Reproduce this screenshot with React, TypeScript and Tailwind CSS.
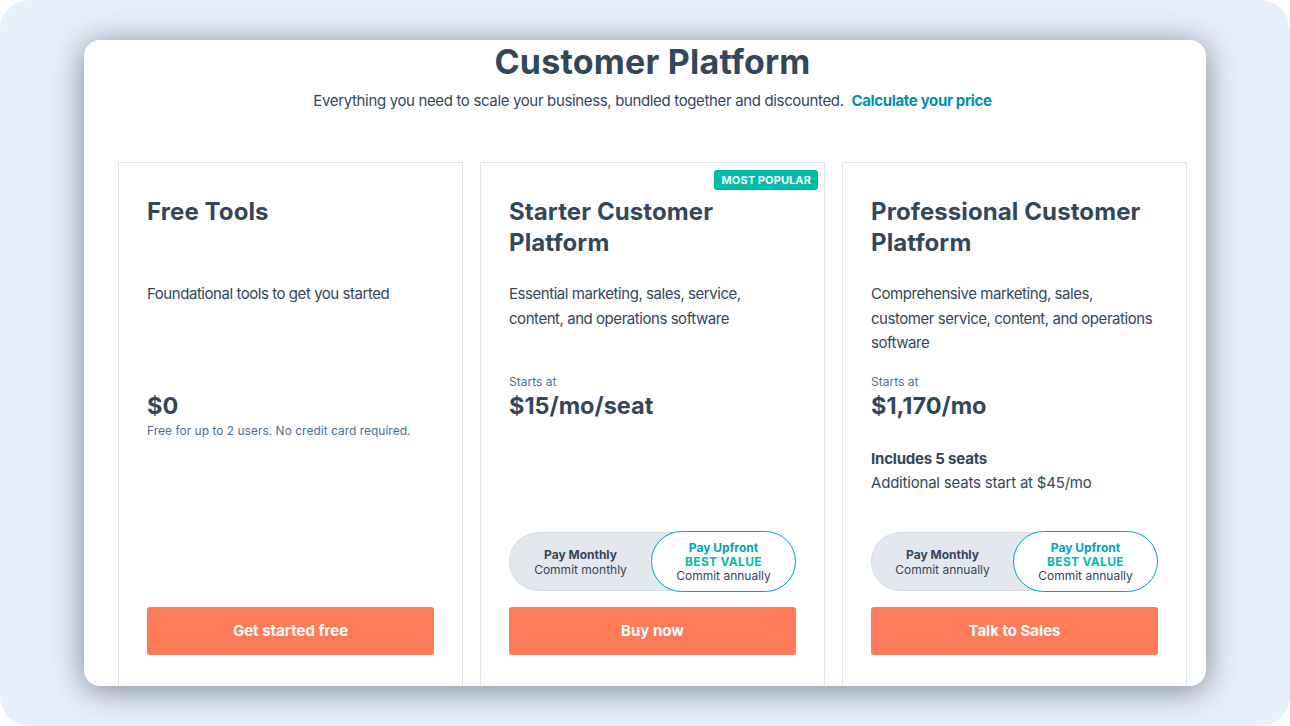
import React from "react";

const font = { fontFamily: "Inter, 'Noto Sans', sans-serif" };

type Plan = {
  name: string;
  desc: string;
  startsAt: boolean;
  price: string;
  note?: string;
  extra?: { bold: string; text: string };
  toggle?: { monthly: string };
  cta: string;
  popular?: boolean;
};

const plans: Plan[] = [
  {
    name: "Free Tools",
    desc: "Foundational tools to get you started",
    startsAt: false,
    price: "$0",
    note: "Free for up to 2 users. No credit card required.",
    cta: "Get started free",
  },
  {
    name: "Starter Customer Platform",
    desc: "Essential marketing, sales, service, content, and operations software",
    startsAt: true,
    price: "$15/mo/seat",
    toggle: { monthly: "Commit monthly" },
    cta: "Buy now",
    popular: true,
  },
  {
    name: "Professional Customer Platform",
    desc: "Comprehensive marketing, sales, customer service, content, and operations software",
    startsAt: true,
    price: "$1,170/mo",
    extra: { bold: "Includes 5 seats", text: "Additional seats start at $45/mo" },
    toggle: { monthly: "Commit annually" },
    cta: "Talk to Sales",
  },
];

export default function App() {
  return (
    <div className="w-[1290px] h-[726px] bg-white" style={font}>
      <div className="w-full h-full rounded-[30px] bg-[#e6f0fb] pt-[40px] pl-[84px]">
        <div className="w-[1122px] h-[646px] bg-white rounded-[16px] overflow-hidden shadow-[0_4px_32px_rgba(30,45,62,0.55)] pl-[34px] pr-[19px]">
          <Header />
          <div className="mt-[49px] grid grid-cols-3 gap-[17px]">
            {plans.map((p) => (
              <PlanCard key={p.name} plan={p} />
            ))}
          </div>
        </div>
      </div>
    </div>
  );
}

const Header = () => {
  return (
    <div className="text-center text-[#33475b]">
      <h1 className="text-[34px] leading-[44px] font-bold tracking-[0.2px]">Customer Platform</h1>
      <p className="mt-[5px] text-[15px] leading-[24px] tracking-[-0.35px]">
        Everything you need to scale your business, bundled together and discounted.{" "}
        <a className="ml-1 font-bold text-[#0091ae]">Calculate your price</a>
      </p>
    </div>
  );
};

const PlanCard = ({ plan }: { plan: Plan }) => {
  return (
    <div className="relative h-[540px] border border-[#dfe3eb] bg-white px-[28px] pt-[33px] pb-[46px] flex flex-col text-[#33475b]">
      {plan.popular && (
        <span className="absolute top-[7px] right-[6px] rounded-[3px] bg-[#00bda5] px-[7px] py-[3px] text-[11px] leading-[14px] font-bold tracking-[0.1px] text-white">
          MOST POPULAR
        </span>
      )}
      <h2 className="h-[62px] text-[24px] leading-[31px] font-bold tracking-[0.1px]">{plan.name}</h2>
      <p className="mt-[24px] h-[91px] text-[15px] leading-[24.5px] tracking-[-0.45px]">{plan.desc}</p>
      <p className={"text-[12px] leading-[18px] text-[#516f90] " + (plan.startsAt ? "" : "invisible")}>Starts at</p>
      <p className="text-[23.5px] leading-[30px] font-bold">{plan.price}</p>
      {plan.note && <p className="mt-[2px] text-[12px] leading-[16px] text-[#516f90]">{plan.note}</p>}
      {plan.extra && (
        <div className="mt-[26px] text-[15px] leading-[24px] tracking-[-0.2px]">
          <p className="font-bold">{plan.extra.bold}</p>
          <p>{plan.extra.text}</p>
        </div>
      )}
      <div className="mt-auto">
        {plan.toggle ? <Toggle monthly={plan.toggle.monthly} /> : <div className="h-[59px]" />}
        <button className="mt-[16px] w-full h-[48px] rounded-[3px] bg-[#ff7a59] text-white text-[15px] font-bold">
          {plan.cta}
        </button>
      </div>
    </div>
  );
};

const Toggle = ({ monthly }: { monthly: string }) => {
  return (
    <div className="h-[59px] flex items-center rounded-full bg-[#e3e7ee] border border-[#d5dbe4]">
      <div className="w-[141px] text-center text-[12px] leading-[15px] text-[#33475b]">
        <p className="font-bold">Pay Monthly</p>
        <p>{monthly}</p>
      </div>
      <div className="flex-1 h-[61px] -mr-px rounded-full bg-white border-[1.5px] border-[#00a4bd] flex flex-col justify-center text-center text-[12px] leading-[14px]">
        <p className="font-bold text-[#00a4bd]">Pay Upfront</p>
        <p className="font-bold text-[#00bda5] tracking-[0.3px]">BEST VALUE</p>
        <p className="text-[#33475b]">Commit annually</p>
      </div>
    </div>
  );
};
